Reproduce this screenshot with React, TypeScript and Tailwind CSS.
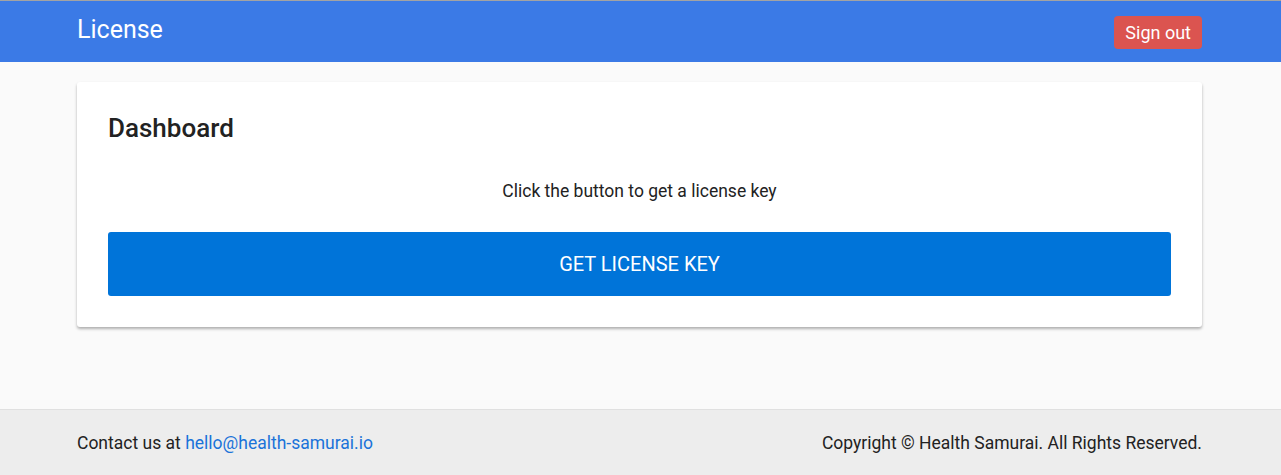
export default function App() {
  return (
    <div className="flex min-h-[475px] flex-col bg-[#fafafa] font-['Roboto',sans-serif] text-[#222]">
      <header className="border-t border-[#a3a3a3] bg-[#3b7ae6] pl-[77px] pr-[79px]">
        <div className="flex h-[61px] items-center justify-between">
          <div className="pb-[3px] text-[25px] text-white">License</div>
          <button className="mt-[2px] h-[33px] rounded-[4px] bg-[#db5450] px-[11px] text-[18px] text-white">
            Sign out
          </button>
        </div>
      </header>

      <main className="flex-1 pl-[77px] pr-[79px]">
        <div className="mt-[20px] rounded-[3px] bg-white px-[31px] pb-[31px] pt-[30px] shadow-[0_2px_3px_rgba(0,0,0,0.3)]">
          <h2 className="text-[26px] font-medium leading-[32px] text-[#222]">Dashboard</h2>
          <p className="mt-[34px] text-center text-[17.5px] leading-[26px] text-[#222]">
            Click the button to get a license key
          </p>
          <button className="mt-[28px] flex h-[64px] w-full items-center justify-center rounded-[3px] bg-[#0074d9] text-[20px] uppercase text-white">
            Get license key
          </button>
        </div>
      </main>

      <footer className="border-t border-[#e0e0e0] bg-[#ededed] pl-[77px] pr-[79px]">
        <div className="flex h-[65px] items-center justify-between pt-[1px] text-[17.5px] text-[#222]">
          <div>
            Contact us at{' '}
            <a href="#" className="text-[#1a73d9]">
              hello@health-samurai.io
            </a>
          </div>
          <div>Copyright © Health Samurai. All Rights Reserved.</div>
        </div>
      </footer>
    </div>
  );
}
